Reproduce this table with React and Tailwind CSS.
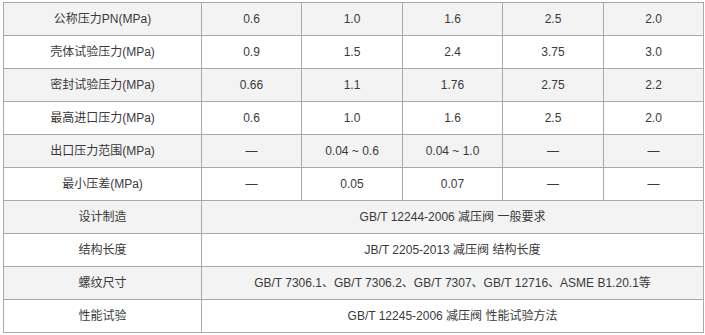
import React from "react";

const rows = [
  ["公称压力PN(MPa)", "0.6", "1.0", "1.6", "2.5", "2.0"],
  ["壳体试验压力(MPa)", "0.9", "1.5", "2.4", "3.75", "3.0"],
  ["密封试验压力(MPa)", "0.66", "1.1", "1.76", "2.75", "2.2"],
  ["最高进口压力(MPa)", "0.6", "1.0", "1.6", "2.5", "2.0"],
  ["出口压力范围(MPa)", "—", "0.04 ~ 0.6", "0.04 ~ 1.0", "—", "—"],
  ["最小压差(MPa)", "—", "0.05", "0.07", "—", "—"],
];

const spans = [
  ["设计制造", "GB/T 12244-2006 减压阀 一般要求"],
  ["结构长度", "JB/T 2205-2013 减压阀 结构长度"],
  ["螺纹尺寸", "GB/T 7306.1、GB/T 7306.2、GB/T 7307、GB/T 12716、ASME B1.20.1等"],
  ["性能试验", "GB/T 12245-2006 减压阀 性能试验方法"],
];

const cell = "border border-[#a9a9a9] h-[33px] p-0 text-center align-middle";

export default function App() {
  return (
    <div className="bg-white w-[705px] h-[335px] pt-[2px] pl-[3px] text-[12px] text-[#3a3a3a] font-['Liberation_Sans','Noto_Sans_CJK_SC',sans-serif]">
      <table className="table-fixed border-collapse w-[700px]">
        <colgroup>
          <col className="w-[198px]" />
          <col className="w-[100px]" />
          <col className="w-[101px]" />
          <col className="w-[100px]" />
          <col className="w-[101px]" />
          <col className="w-[100px]" />
        </colgroup>
        <tbody>
          {rows.map((r, i) => (
            <tr key={i} className={i % 2 === 0 ? "bg-[#f3f3f3]" : "bg-white"}>
              {r.map((c, j) => (
                <td key={j} className={cell}>{c}</td>
              ))}
            </tr>
          ))}
          {spans.map((r, i) => (
            <tr key={"s" + i} className={i % 2 === 0 ? "bg-[#f3f3f3]" : "bg-white"}>
              <td className={cell}>{r[0]}</td>
              <td className={cell} colSpan={5}>{r[1]}</td>
            </tr>
          ))}
        </tbody>
      </table>
    </div>
  );
}
